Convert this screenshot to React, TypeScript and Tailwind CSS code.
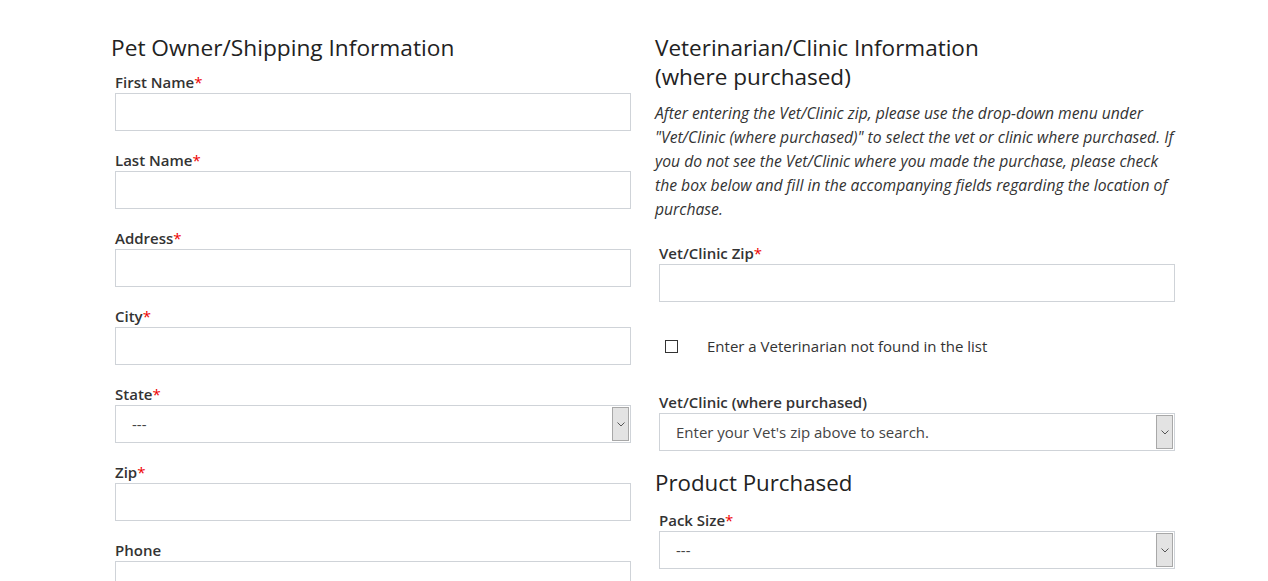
import type { ReactNode } from "react";

const FONT = { fontFamily: '"Open Sans", "Noto Sans", Arial, sans-serif' };

function Label({ children, required }: { children: ReactNode; required?: boolean }) {
  return (
    <div className="h-[21px] text-[15px] leading-[21px] font-semibold text-[#333]">
      {children}
      {required && <span className="text-[#e00] font-normal">*</span>}
    </div>
  );
}

function TextInput() {
  return <div className="h-[38px] w-full border border-[#cfd3d8] bg-white" />;
}

function Select({ value }: { value: string }) {
  return (
    <div className="flex h-[38px] w-full items-center border border-[#cfd3d8] bg-white">
      <span className="flex-1 pl-4 text-[15px] text-[#444]">{value}</span>
      <span className="mr-[1px] flex h-[34px] w-[17px] items-center justify-center border border-[#a8a8a8] bg-[#e3e3e3]">
        <svg width="8" height="5" viewBox="0 0 8 5" fill="none">
          <path d="M0.5 0.5L4 4L7.5 0.5" stroke="#555" strokeWidth="1" />
        </svg>
      </span>
    </div>
  );
}

function Field({ label, required, select }: { label: string; required?: boolean; select?: string }) {
  return (
    <div className="flex flex-col px-1">
      <Label required={required}>{label}</Label>
      {select ? <Select value={select} /> : <TextInput />}
    </div>
  );
}

export default function App() {
  return (
    <div className="min-h-[581px] w-full overflow-hidden bg-white" style={FONT}>
      <div className="ml-[111px] flex gap-5 pt-[33px]">
        <div className="flex w-[524px] flex-col">
          <h2 className="text-[22.7px] leading-[29px] font-normal text-[#222]">Pet Owner/Shipping Information</h2>
          <div className="mt-[10px] flex flex-col gap-[19px]">
            <Field label="First Name" required />
            <Field label="Last Name" required />
            <Field label="Address" required />
            <Field label="City" required />
            <Field label="State" required select="---" />
            <Field label="Zip" required />
            <Field label="Phone" />
          </div>
        </div>

        <div className="flex w-[524px] flex-col">
          <h2 className="text-[22.5px] leading-[29px] font-normal text-[#222]">
            Veterinarian/Clinic Information
            <br />
            (where purchased)
          </h2>
          <p className="mt-[10px] whitespace-nowrap text-[15.7px] leading-[24px] italic text-[#333]">
            After entering the Vet/Clinic zip, please use the drop-down menu under
            <br />
            "Vet/Clinic (where purchased)" to select the vet or clinic where purchased. If
            <br />
            you do not see the Vet/Clinic where you made the purchase, please check
            <br />
            the box below and fill in the accompanying fields regarding the location of
            <br />
            purchase.
          </p>
          <div className="mt-[22px]">
            <Field label="Vet/Clinic Zip" required />
          </div>
          <div className="flex h-[90px] items-center px-[10px] pb-[2px]">
            <span className="h-[13px] w-[13px] border border-[#333] bg-white" />
            <span className="ml-[29px] text-[15px] text-[#333]">Enter a Veterinarian not found in the list</span>
          </div>
          <Field label="Vet/Clinic (where purchased)" select="Enter your Vet's zip above to search." />
          <h2 className="mt-[17px] text-[22.3px] leading-[29px] font-normal text-[#222]">Product Purchased</h2>
          <div className="mt-[13px]">
            <Field label="Pack Size" required select="---" />
          </div>
        </div>
      </div>
    </div>
  );
}
